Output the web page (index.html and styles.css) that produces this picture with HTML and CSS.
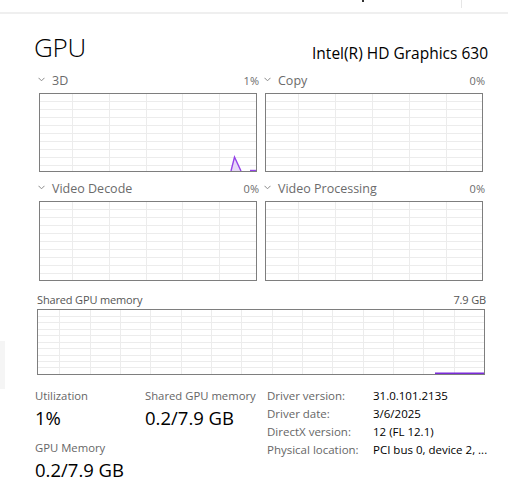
FILE: index.html
```html
<!DOCTYPE html>
<html>
<head>
<meta charset="utf-8">
<link rel="stylesheet" href="styles.css">
</head>
<body>
<div class="topstrip">
  <span class="tick"></span>
  <span class="vline"></span>
</div>
<div class="sidegrey"></div>
<main class="panel">
  <header class="head">
    <h1 class="title">GPU</h1>
    <div class="model">Intel(R) HD Graphics 630</div>
  </header>

  <section class="engines">
    <div class="engine">
      <div class="elabel"><svg class="chev" width="7" height="5" viewBox="0 0 7 5"><polyline points="0.5,0.8 3.5,3.8 6.5,0.8"/></svg><span class="ename">3D</span><span class="epct">1%</span></div>
      <div class="chart">
        <svg width="216" height="77" viewBox="0 0 216 77">
          <g class="grid">
            <line x1="32.5" y1="0" x2="32.5" y2="77"/><line x1="69.5" y1="0" x2="69.5" y2="77"/><line x1="106.5" y1="0" x2="106.5" y2="77"/><line x1="142.5" y1="0" x2="142.5" y2="77"/><line x1="179.5" y1="0" x2="179.5" y2="77"/>
            <line x1="0" y1="7.5" x2="216" y2="7.5"/><line x1="0" y1="15.5" x2="216" y2="15.5"/><line x1="0" y1="23.5" x2="216" y2="23.5"/><line x1="0" y1="31.5" x2="216" y2="31.5"/><line x1="0" y1="39.5" x2="216" y2="39.5"/><line x1="0" y1="47.5" x2="216" y2="47.5"/><line x1="0" y1="55.5" x2="216" y2="55.5"/><line x1="0" y1="63.5" x2="216" y2="63.5"/><line x1="0" y1="71.5" x2="216" y2="71.5"/>
          </g>
          <path class="area" d="M191 77 L194.5 63 L201 77 Z"/>
          <path class="stroke" d="M191 77 L194.5 63 L201 77"/>
          <path class="stroke" d="M210 76.5 L216 76.5"/>
        </svg>
      </div>
    </div>
    <div class="engine">
      <div class="elabel"><svg class="chev" width="7" height="5" viewBox="0 0 7 5"><polyline points="0.5,0.8 3.5,3.8 6.5,0.8"/></svg><span class="ename">Copy</span><span class="epct">0%</span></div>
      <div class="chart">
        <svg width="216" height="77" viewBox="0 0 216 77">
          <g class="grid">
            <line x1="32.5" y1="0" x2="32.5" y2="77"/><line x1="69.5" y1="0" x2="69.5" y2="77"/><line x1="106.5" y1="0" x2="106.5" y2="77"/><line x1="143.5" y1="0" x2="143.5" y2="77"/><line x1="180.5" y1="0" x2="180.5" y2="77"/>
            <line x1="0" y1="7.5" x2="216" y2="7.5"/><line x1="0" y1="15.5" x2="216" y2="15.5"/><line x1="0" y1="23.5" x2="216" y2="23.5"/><line x1="0" y1="31.5" x2="216" y2="31.5"/><line x1="0" y1="39.5" x2="216" y2="39.5"/><line x1="0" y1="47.5" x2="216" y2="47.5"/><line x1="0" y1="55.5" x2="216" y2="55.5"/><line x1="0" y1="63.5" x2="216" y2="63.5"/><line x1="0" y1="71.5" x2="216" y2="71.5"/>
          </g>
        </svg>
      </div>
    </div>
    <div class="engine">
      <div class="elabel"><svg class="chev" width="7" height="5" viewBox="0 0 7 5"><polyline points="0.5,0.8 3.5,3.8 6.5,0.8"/></svg><span class="ename">Video Decode</span><span class="epct">0%</span></div>
      <div class="chart tall">
        <svg width="216" height="78" viewBox="0 0 216 78">
          <g class="grid">
            <line x1="32.5" y1="0" x2="32.5" y2="78"/><line x1="69.5" y1="0" x2="69.5" y2="78"/><line x1="106.5" y1="0" x2="106.5" y2="78"/><line x1="142.5" y1="0" x2="142.5" y2="78"/><line x1="179.5" y1="0" x2="179.5" y2="78"/>
            <line x1="0" y1="7.5" x2="216" y2="7.5"/><line x1="0" y1="15.5" x2="216" y2="15.5"/><line x1="0" y1="23.5" x2="216" y2="23.5"/><line x1="0" y1="31.5" x2="216" y2="31.5"/><line x1="0" y1="39.5" x2="216" y2="39.5"/><line x1="0" y1="47.5" x2="216" y2="47.5"/><line x1="0" y1="55.5" x2="216" y2="55.5"/><line x1="0" y1="63.5" x2="216" y2="63.5"/><line x1="0" y1="71.5" x2="216" y2="71.5"/>
          </g>
        </svg>
      </div>
    </div>
    <div class="engine">
      <div class="elabel"><svg class="chev" width="7" height="5" viewBox="0 0 7 5"><polyline points="0.5,0.8 3.5,3.8 6.5,0.8"/></svg><span class="ename">Video Processing</span><span class="epct">0%</span></div>
      <div class="chart tall">
        <svg width="216" height="78" viewBox="0 0 216 78">
          <g class="grid">
            <line x1="32.5" y1="0" x2="32.5" y2="78"/><line x1="69.5" y1="0" x2="69.5" y2="78"/><line x1="106.5" y1="0" x2="106.5" y2="78"/><line x1="143.5" y1="0" x2="143.5" y2="78"/><line x1="180.5" y1="0" x2="180.5" y2="78"/>
            <line x1="0" y1="7.5" x2="216" y2="7.5"/><line x1="0" y1="15.5" x2="216" y2="15.5"/><line x1="0" y1="23.5" x2="216" y2="23.5"/><line x1="0" y1="31.5" x2="216" y2="31.5"/><line x1="0" y1="39.5" x2="216" y2="39.5"/><line x1="0" y1="47.5" x2="216" y2="47.5"/><line x1="0" y1="55.5" x2="216" y2="55.5"/><line x1="0" y1="63.5" x2="216" y2="63.5"/><line x1="0" y1="71.5" x2="216" y2="71.5"/>
          </g>
        </svg>
      </div>
    </div>
  </section>

  <section class="shared">
    <div class="slabel"><span>Shared GPU memory</span><span>7.9 GB</span></div>
    <div class="chart wide">
      <svg width="446" height="64" viewBox="0 0 446 64">
        <g class="grid">
          <line x1="21.5" y1="0" x2="21.5" y2="64"/><line x1="52.5" y1="0" x2="52.5" y2="64"/><line x1="82.5" y1="0" x2="82.5" y2="64"/><line x1="112.5" y1="0" x2="112.5" y2="64"/><line x1="143.5" y1="0" x2="143.5" y2="64"/><line x1="173.5" y1="0" x2="173.5" y2="64"/><line x1="203.5" y1="0" x2="203.5" y2="64"/><line x1="234.5" y1="0" x2="234.5" y2="64"/><line x1="264.5" y1="0" x2="264.5" y2="64"/><line x1="294.5" y1="0" x2="294.5" y2="64"/><line x1="325.5" y1="0" x2="325.5" y2="64"/><line x1="355.5" y1="0" x2="355.5" y2="64"/><line x1="385.5" y1="0" x2="385.5" y2="64"/><line x1="416.5" y1="0" x2="416.5" y2="64"/>
          <line x1="0" y1="6.5" x2="446" y2="6.5"/><line x1="0" y1="12.5" x2="446" y2="12.5"/><line x1="0" y1="19.5" x2="446" y2="19.5"/><line x1="0" y1="25.5" x2="446" y2="25.5"/><line x1="0" y1="32.5" x2="446" y2="32.5"/><line x1="0" y1="38.5" x2="446" y2="38.5"/><line x1="0" y1="45.5" x2="446" y2="45.5"/><line x1="0" y1="51.5" x2="446" y2="51.5"/><line x1="0" y1="57.5" x2="446" y2="57.5"/>
        </g>
        <path class="memline" d="M397 63.3 L446 63.3"/>
      </svg>
    </div>
  </section>

  <section class="stats">
    <div class="col col1">
      <div class="stat first">
        <div class="slbl">Utilization</div>
        <div class="sval">1%</div>
      </div>
      <div class="stat">
        <div class="slbl">GPU Memory</div>
        <div class="sval">0.2/7.9 GB</div>
      </div>
    </div>
    <div class="col col2">
      <div class="stat first">
        <div class="slbl">Shared GPU memory</div>
        <div class="sval">0.2/7.9 GB</div>
      </div>
    </div>
    <dl class="props">
      <dt>Driver version:</dt><dd>31.0.101.2135</dd>
      <dt>Driver date:</dt><dd>3/6/2025</dd>
      <dt>DirectX version:</dt><dd>12 (FL 12.1)</dd>
      <dt>Physical location:</dt><dd>PCI bus 0, device 2, ...</dd>
    </dl>
  </section>
</main>
</body>
</html>
```

FILE: styles.css
```css
* { box-sizing: border-box; }
html, body { margin: 0; padding: 0; background: #ffffff; }
body {
  width: 508px;
  height: 494px;
  overflow: hidden;
  font-family: "Open Sans", "Noto Sans", sans-serif;
  color: #000;
  position: relative;
}
.topstrip {
  height: 14px;
  border-bottom: 2px solid #efefef;
  display: flex;
  align-items: flex-start;
}
.tick {
  width: 2px;
  height: 2px;
  background: #333;
  margin-left: 362px;
}
.vline {
  width: 1px;
  height: 8px;
  background: #e6e6e6;
  margin-left: 97px;
}
.sidegrey {
  position: absolute;
  left: 0;
  top: 341px;
  width: 5px;
  height: 48px;
  background: #f5f5f5;
}
.panel {
  padding-left: 34px;
  width: 488px;
}
.head {
  display: flex;
  justify-content: space-between;
  align-items: flex-end;
  height: 48px;
}
.title {
  margin: 0;
  font-weight: 300;
  font-size: 26px;
  line-height: 30px;
  letter-spacing: -0.2px;
}
.model {
  font-size: 15.5px;
  line-height: 20px;
  margin-bottom: -1px;
}
.engines {
  display: grid;
  grid-template-columns: 221px 221px;
  column-gap: 5px;
  margin-left: 4px;
  margin-top: 8px;
}
.elabel {
  display: flex;
  align-items: center;
  height: 20px;
  margin-bottom: 3px;
  font-size: 12px;
  color: #6b6b6b;
}
.chev {
  display: block;
  width: 7px;
  height: 5px;
  margin-right: 7px;
  margin-top: -2px;
}
.chev polyline {
  fill: none;
  stroke: #8a8a8a;
  stroke-width: 1;
}
.ename { flex: 1; font-size: 12.5px; }
.epct { font-size: 11px; }
.chart {
  border: 1px solid #7e7e7e;
  width: 218px;
  height: 79px;
  margin-left: 1px;
  margin-bottom: 6px;
}
.chart.tall { height: 80px; }
.chart svg { display: block; }
.grid line {
  stroke: #ececec;
  stroke-width: 1;
  shape-rendering: crispEdges;
}
.area { fill: #e6d8f7; }
.stroke { fill: none; stroke: #9543e8; stroke-width: 1.4; }
.memline { stroke: #7a2bd8; stroke-width: 1.6; fill: none; }
.shared { margin-left: 3px; margin-top: 2px; }
.slabel {
  display: flex;
  justify-content: space-between;
  width: 449px;
  font-size: 11px;
  letter-spacing: -0.15px;
  color: #555;
  height: 20px;
  align-items: center;
}
.chart.wide {
  width: 448px;
  height: 66px;
  margin-left: 0;
}
.stats {
  display: flex;
  margin-top: 13px;
  margin-left: 1px;
}
.col1 { width: 110px; }
.col2 { width: 122px; }
.stat.first { margin-bottom: 9px; }
.slbl {
  font-size: 11.3px;
  color: #666;
  line-height: 16px;
}
.sval {
  font-size: 18.5px;
  line-height: 27px;
  font-weight: 400;
}
.props {
  margin: -1px 0 0 0;
  display: grid;
  grid-template-columns: 106px auto;
  grid-auto-rows: 18px;
  row-gap: 0;
  font-size: 11.5px;
  line-height: 18px;
  align-content: start;
}
.props dt, .props dd { margin: 0; height: 18px; white-space: nowrap; }
.props dt { color: #666; }
.props dd { color: #000; }
```
